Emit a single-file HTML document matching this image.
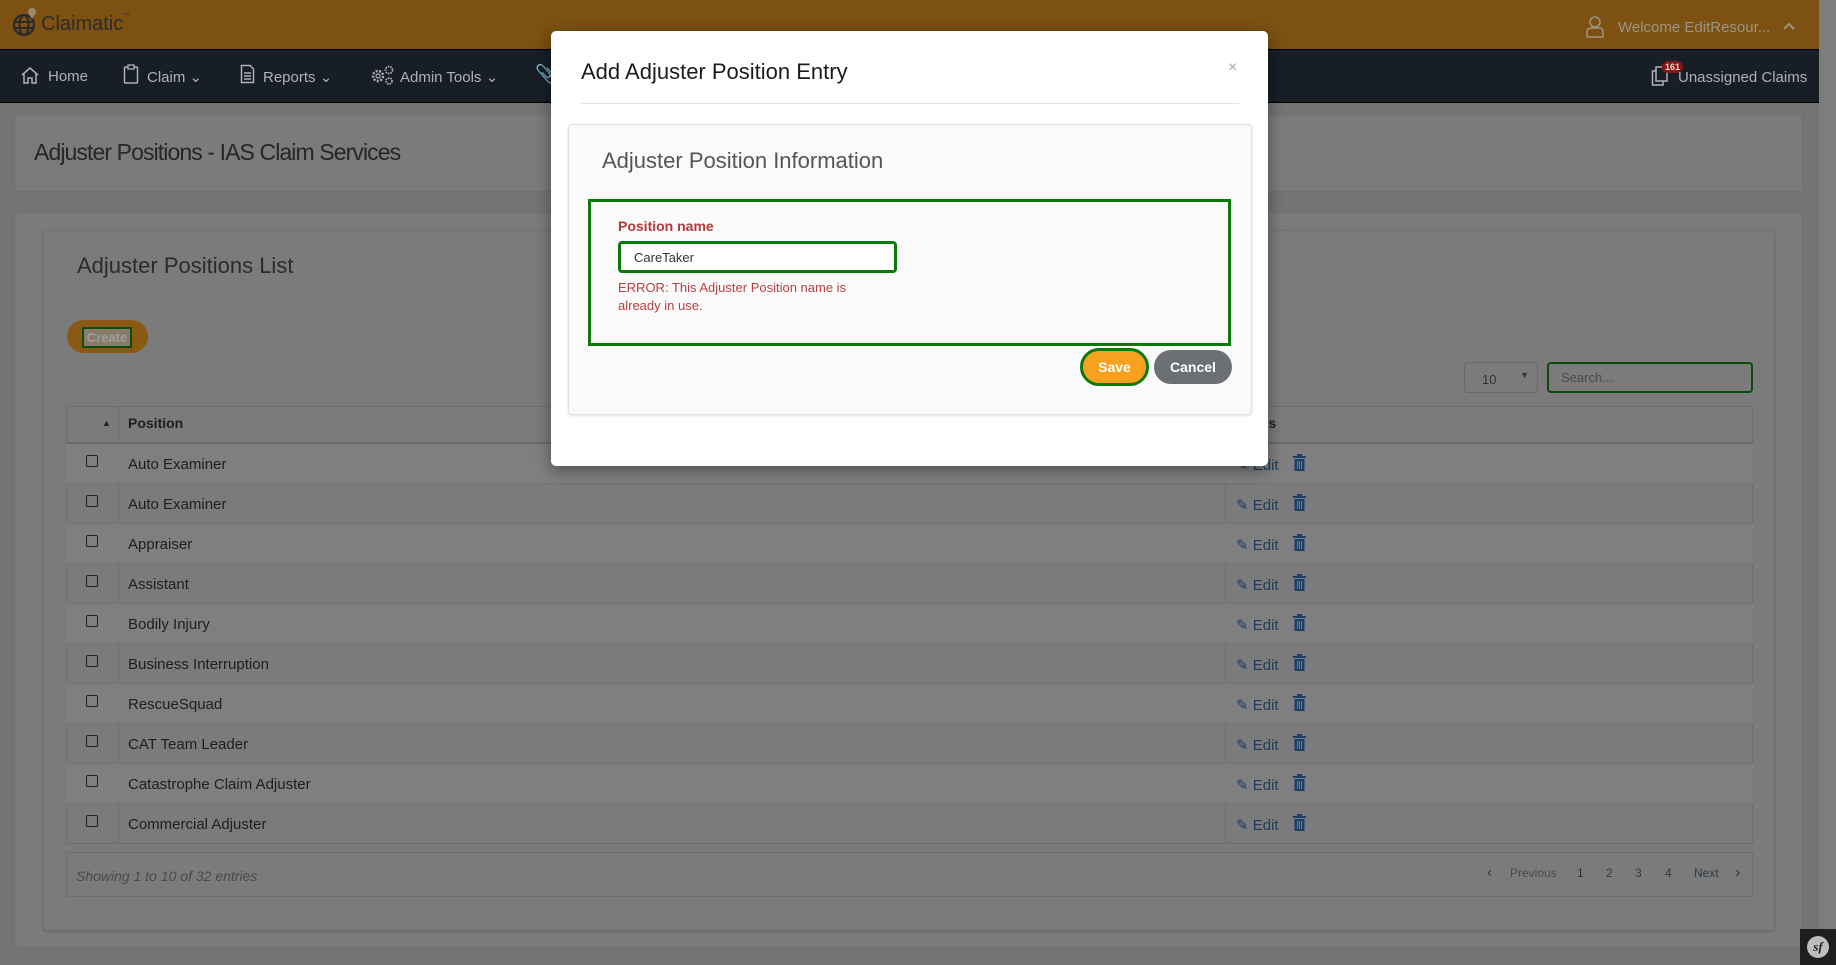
<!DOCTYPE html>
<html><head><meta charset="utf-8">
<style>
*{box-sizing:border-box;margin:0;padding:0}
body{width:1836px;height:965px;overflow:hidden;background:#747474;font-family:"Liberation Sans",sans-serif;position:relative}
.abs{position:absolute}
.top{left:0;top:0;width:1819px;height:49px;background:#7c5111}
.nav{left:0;top:49px;width:1819px;height:54px;background:#171e26;border-top:1px solid #000;border-bottom:1px solid #000}
.sb{left:1819px;top:0;width:17px;height:965px;background:#7d7d7d}
.nv{color:#aeb2b7;font-size:15px;top:68px}
.panel{background:#7b7b7b;border:1px solid #717171;border-radius:4px}
.row{position:absolute;left:66px;width:1687px;height:40px;border-bottom:1px solid #747474}
.row .cb{position:absolute;left:20px;top:11px;width:12px;height:12px;border:1.5px solid #222;border-radius:2px}
.row .t{position:absolute;left:62px;top:12px;font-size:15px;color:#1e1e1e}
.row .e{position:absolute;left:1170px;top:12px;font-size:15px;color:#1f3a5a}
.row .tr{position:absolute;left:1227px;top:10px;width:13px;height:17px}
.pg{top:866px;font-size:12px;color:#2a3a4a}
</style></head><body>
<div class="abs top"></div>
<div class="abs sb"></div>
<svg class="abs" style="left:11px;top:6px" width="30" height="32" viewBox="0 0 30 32"><circle cx="13" cy="19" r="10" fill="none" stroke="#2a2a2a" stroke-width="2.2"/><ellipse cx="13" cy="19" rx="4.5" ry="10" fill="none" stroke="#2a2a2a" stroke-width="2"/><line x1="3" y1="16" x2="23" y2="16" stroke="#2a2a2a" stroke-width="2"/><line x1="3" y1="22" x2="23" y2="22" stroke="#2a2a2a" stroke-width="2"/><circle cx="21" cy="6" r="4" fill="#9a8a70"/><path d="M18 8 L21 13 L24 8Z" fill="#9a8a70"/></svg>
<div class="abs" style="left:41px;top:13px;font-size:20px;color:#2c2c2c">Claimatic<span style="font-size:6px;vertical-align:top">™</span></div>
<svg class="abs" style="left:1586px;top:16px" width="18" height="22" viewBox="0 0 18 22"><circle cx="9" cy="6" r="5" fill="none" stroke="#9c9484" stroke-width="1.5"/><path d="M1 21 V16 Q1 12 5 12 H13 Q17 12 17 16 V21Z" fill="none" stroke="#9c9484" stroke-width="1.5"/></svg>
<div class="abs" style="left:1618px;top:19px;font-size:15px;color:#9c9484">Welcome EditResour...</div>
<svg class="abs" style="left:1783px;top:22px" width="12" height="8" viewBox="0 0 12 8"><path d="M1 7 L6 2 L11 7" fill="none" stroke="#9c9484" stroke-width="2"/></svg>

<div class="abs nav"></div>
<svg class="abs" style="left:20px;top:66px" width="20" height="18" viewBox="0 0 20 18"><path d="M2 9 L10 2 L18 9 M4 8 V17 H8 V12 H12 V17 H16 V8" fill="none" stroke="#aeb2b7" stroke-width="1.5"/></svg>
<div class="abs nv" style="left:48px">Home</div>
<svg class="abs" style="left:123px;top:64px" width="16" height="20" viewBox="0 0 16 20"><rect x="1.5" y="3" width="13" height="16" rx="1" fill="none" stroke="#aeb2b7" stroke-width="1.5"/><rect x="5" y="1" width="6" height="4" fill="#171e26" stroke="#aeb2b7" stroke-width="1.3"/></svg>
<div class="abs nv" style="left:147px">Claim ⌄</div>
<svg class="abs" style="left:240px;top:64px" width="15" height="20" viewBox="0 0 15 20"><path d="M1.5 1.5 H10 L13.5 5 V18.5 H1.5Z" fill="none" stroke="#aeb2b7" stroke-width="1.5"/><path d="M4 9H11M4 12H11M4 15H11" stroke="#aeb2b7" stroke-width="1.5"/></svg>
<div class="abs nv" style="left:263px">Reports ⌄</div>
<svg class="abs" style="left:369px;top:64px" width="26" height="22" viewBox="0 0 26 22"><circle cx="9" cy="12" r="5" fill="none" stroke="#aeb2b7" stroke-width="2.5" stroke-dasharray="2 1.5"/><circle cx="9" cy="12" r="2" fill="none" stroke="#aeb2b7" stroke-width="1.2"/><circle cx="20" cy="6" r="3.5" fill="none" stroke="#aeb2b7" stroke-width="1.8" stroke-dasharray="1.5 1"/><circle cx="20" cy="17" r="3" fill="none" stroke="#aeb2b7" stroke-width="1.8" stroke-dasharray="1.5 1"/></svg>
<div class="abs nv" style="left:400px">Admin Tools ⌄</div>
<div class="abs nv" style="left:535px;top:64px;font-size:18px">&#128206;</div>
<svg class="abs" style="left:1651px;top:66px" width="18" height="20" viewBox="0 0 18 20"><rect x="5" y="1" width="11" height="14" fill="none" stroke="#aeb2b7" stroke-width="1.5"/><path d="M5 5 H1.5 V19 H12 V15" fill="none" stroke="#aeb2b7" stroke-width="1.5"/></svg>
<div class="abs" style="left:1662px;top:61px;background:#8a1414;color:#ddd;font-size:9px;border-radius:7px;padding:1px 3px;font-weight:bold">161</div>
<div class="abs nv" style="left:1678px;top:69px">Unassigned Claims</div>

<div class="abs panel" style="left:14px;top:114px;width:1789px;height:78px"></div>
<div class="abs" style="left:34px;top:139px;font-size:23px;color:#262626;letter-spacing:-0.9px">Adjuster Positions - IAS Claim Services</div>
<div class="abs panel" style="left:14px;top:212px;width:1789px;height:736px"></div>
<div class="abs panel" style="left:43px;top:230px;width:1732px;height:701px;box-shadow:0 1px 2px rgba(0,0,0,.15)"></div>
<div class="abs" style="left:77px;top:253px;font-size:22px;color:#2b2b2b">Adjuster Positions List</div>
<div class="abs" style="left:67px;top:320px;width:81px;height:33px;border-radius:17px;background:#8a5a14"></div>
<div class="abs" style="left:82px;top:327px;width:50px;height:21px;border:2px solid #0a4e0a;background:#8a7a6a;color:#9e9e9e;font-size:13px;font-weight:bold;text-align:center;line-height:17px">Create</div>
<div class="abs" style="left:1464px;top:362px;width:74px;height:31px;border:1px solid #6a6a6a;border-radius:4px;font-size:13px;color:#333;padding:9px 0 0 17px">10<span style="position:absolute;right:8px;top:7px;font-size:9px">▼</span></div>
<div class="abs" style="left:1547px;top:362px;width:206px;height:31px;border:2.5px solid #0a4a0a;border-radius:4px;font-size:13px;color:#4a4a4a;padding:6px 0 0 12px">Search...</div>

<div class="abs" style="left:66px;top:406px;width:1687px;height:438px;border:1px solid #6e6e6e"></div>
<div class="abs" style="left:66px;top:406px;width:1687px;height:38px;border-bottom:2px solid #6a6a6a"></div>
<div class="abs" style="left:118px;top:406px;width:1px;height:438px;background:#6e6e6e"></div>
<div class="abs" style="left:1225px;top:406px;width:1px;height:438px;background:#6e6e6e"></div>
<div class="abs" style="left:102px;top:418px;font-size:9px;color:#222">▲</div>
<div class="abs" style="left:128px;top:415px;font-size:14px;font-weight:bold;color:#1e1e1e">Position</div>
<div class="abs" style="left:1260px;top:415px;font-size:14px;font-weight:bold;color:#1e1e1e">ns</div>

<div class="row" style="top:444px;background:#7f7f7f"><div class="cb"></div><div class="t">Auto Examiner</div><div class="e">✎ Edit</div><svg class="tr" viewBox="0 0 13 17"><rect x="0" y="2" width="13" height="2" fill="#1f3e66"/><rect x="4" y="0" width="5" height="2" fill="#1f3e66"/><rect x="1.5" y="5" width="10" height="12" fill="#1f3e66"/><path d="M4.5 7V15M6.5 7V15M8.5 7V15" stroke="#7a7a7a"/></svg></div>
<div class="row" style="top:484px"><div class="cb"></div><div class="t">Auto Examiner</div><div class="e">✎ Edit</div><svg class="tr" viewBox="0 0 13 17"><rect x="0" y="2" width="13" height="2" fill="#1f3e66"/><rect x="4" y="0" width="5" height="2" fill="#1f3e66"/><rect x="1.5" y="5" width="10" height="12" fill="#1f3e66"/><path d="M4.5 7V15M6.5 7V15M8.5 7V15" stroke="#7a7a7a"/></svg></div>
<div class="row" style="top:524px;background:#7f7f7f"><div class="cb"></div><div class="t">Appraiser</div><div class="e">✎ Edit</div><svg class="tr" viewBox="0 0 13 17"><rect x="0" y="2" width="13" height="2" fill="#1f3e66"/><rect x="4" y="0" width="5" height="2" fill="#1f3e66"/><rect x="1.5" y="5" width="10" height="12" fill="#1f3e66"/><path d="M4.5 7V15M6.5 7V15M8.5 7V15" stroke="#7a7a7a"/></svg></div>
<div class="row" style="top:564px"><div class="cb"></div><div class="t">Assistant</div><div class="e">✎ Edit</div><svg class="tr" viewBox="0 0 13 17"><rect x="0" y="2" width="13" height="2" fill="#1f3e66"/><rect x="4" y="0" width="5" height="2" fill="#1f3e66"/><rect x="1.5" y="5" width="10" height="12" fill="#1f3e66"/><path d="M4.5 7V15M6.5 7V15M8.5 7V15" stroke="#7a7a7a"/></svg></div>
<div class="row" style="top:604px;background:#7f7f7f"><div class="cb"></div><div class="t">Bodily Injury</div><div class="e">✎ Edit</div><svg class="tr" viewBox="0 0 13 17"><rect x="0" y="2" width="13" height="2" fill="#1f3e66"/><rect x="4" y="0" width="5" height="2" fill="#1f3e66"/><rect x="1.5" y="5" width="10" height="12" fill="#1f3e66"/><path d="M4.5 7V15M6.5 7V15M8.5 7V15" stroke="#7a7a7a"/></svg></div>
<div class="row" style="top:644px"><div class="cb"></div><div class="t">Business Interruption</div><div class="e">✎ Edit</div><svg class="tr" viewBox="0 0 13 17"><rect x="0" y="2" width="13" height="2" fill="#1f3e66"/><rect x="4" y="0" width="5" height="2" fill="#1f3e66"/><rect x="1.5" y="5" width="10" height="12" fill="#1f3e66"/><path d="M4.5 7V15M6.5 7V15M8.5 7V15" stroke="#7a7a7a"/></svg></div>
<div class="row" style="top:684px;background:#7f7f7f"><div class="cb"></div><div class="t">RescueSquad</div><div class="e">✎ Edit</div><svg class="tr" viewBox="0 0 13 17"><rect x="0" y="2" width="13" height="2" fill="#1f3e66"/><rect x="4" y="0" width="5" height="2" fill="#1f3e66"/><rect x="1.5" y="5" width="10" height="12" fill="#1f3e66"/><path d="M4.5 7V15M6.5 7V15M8.5 7V15" stroke="#7a7a7a"/></svg></div>
<div class="row" style="top:724px"><div class="cb"></div><div class="t">CAT Team Leader</div><div class="e">✎ Edit</div><svg class="tr" viewBox="0 0 13 17"><rect x="0" y="2" width="13" height="2" fill="#1f3e66"/><rect x="4" y="0" width="5" height="2" fill="#1f3e66"/><rect x="1.5" y="5" width="10" height="12" fill="#1f3e66"/><path d="M4.5 7V15M6.5 7V15M8.5 7V15" stroke="#7a7a7a"/></svg></div>
<div class="row" style="top:764px;background:#7f7f7f"><div class="cb"></div><div class="t">Catastrophe Claim Adjuster</div><div class="e">✎ Edit</div><svg class="tr" viewBox="0 0 13 17"><rect x="0" y="2" width="13" height="2" fill="#1f3e66"/><rect x="4" y="0" width="5" height="2" fill="#1f3e66"/><rect x="1.5" y="5" width="10" height="12" fill="#1f3e66"/><path d="M4.5 7V15M6.5 7V15M8.5 7V15" stroke="#7a7a7a"/></svg></div>
<div class="row" style="top:804px;border-bottom:none"><div class="cb"></div><div class="t">Commercial Adjuster</div><div class="e">✎ Edit</div><svg class="tr" viewBox="0 0 13 17"><rect x="0" y="2" width="13" height="2" fill="#1f3e66"/><rect x="4" y="0" width="5" height="2" fill="#1f3e66"/><rect x="1.5" y="5" width="10" height="12" fill="#1f3e66"/><path d="M4.5 7V15M6.5 7V15M8.5 7V15" stroke="#7a7a7a"/></svg></div>

<div class="abs" style="left:66px;top:852px;width:1687px;height:45px;border:1px solid #6e6e6e"></div>
<div class="abs" style="left:76px;top:868px;font-size:14px;font-style:italic;color:#4a4a4a">Showing 1 to 10 of 32 entries</div>
<div class="abs pg" style="left:1487px;top:864px;font-size:16px;color:#3a3a3a">‹</div>
<div class="abs pg" style="left:1510px;color:#4a4a4a">Previous</div>
<div class="abs pg" style="left:1577px;color:#333">1</div>
<div class="abs pg" style="left:1606px">2</div>
<div class="abs pg" style="left:1635px">3</div>
<div class="abs pg" style="left:1665px">4</div>
<div class="abs pg" style="left:1694px">Next</div>
<div class="abs pg" style="left:1735px;top:864px;font-size:16px">›</div>
<div class="abs" style="left:1800px;top:929px;width:36px;height:36px;background:#1e1e1e"></div>
<div class="abs" style="left:1807px;top:936px;width:22px;height:22px;border-radius:50%;background:#bdbdbd;color:#1e1e1e;font:italic bold 13px 'Liberation Serif',serif;text-align:center;line-height:22px">sf</div>

<div class="abs" style="left:551px;top:31px;width:717px;height:435px;background:#fff;border-radius:5px;box-shadow:0 4px 16px rgba(0,0,0,.4)"></div>
<div class="abs" style="left:581px;top:59px;font-size:22px;color:#1c1c1c">Add Adjuster Position Entry</div>
<div class="abs" style="left:1228px;top:59px;font-size:16px;color:#aaa">×</div>
<div class="abs" style="left:581px;top:103px;width:658px;height:1px;background:#e2e2e2"></div>
<div class="abs" style="left:568px;top:124px;width:684px;height:291px;background:#fafafa;border:1px solid #e0e0e0;border-radius:4px;box-shadow:0 1px 3px rgba(0,0,0,.12)"></div>
<div class="abs" style="left:602px;top:148px;font-size:22px;color:#555">Adjuster Position Information</div>
<div class="abs" style="left:588px;top:199px;width:643px;height:147px;border:3px solid #0a7a0a"></div>
<div class="abs" style="left:618px;top:218px;font-size:14px;font-weight:bold;color:#b23a3a">Position name</div>
<div class="abs" style="left:618px;top:241px;width:279px;height:32px;border:3px solid #0a7a0a;border-radius:4px;background:#fff;font-size:13px;color:#333;padding:6px 0 0 13px">CareTaker</div>
<div class="abs" style="left:618px;top:279px;font-size:13px;line-height:18px;color:#b84040">ERROR: This Adjuster Position name is<br>already in use.</div>
<div class="abs" style="left:1080px;top:348px;width:69px;height:38px;border:3px solid #0a7a0a;border-radius:19px;background:#f6a11f;color:#fff;font-size:14px;font-weight:bold;text-align:center;line-height:32px">Save</div>
<div class="abs" style="left:1154px;top:350px;width:78px;height:34px;border-radius:17px;background:#6c7075;color:#fff;font-size:14px;font-weight:bold;text-align:center;line-height:34px">Cancel</div>
</body></html>
